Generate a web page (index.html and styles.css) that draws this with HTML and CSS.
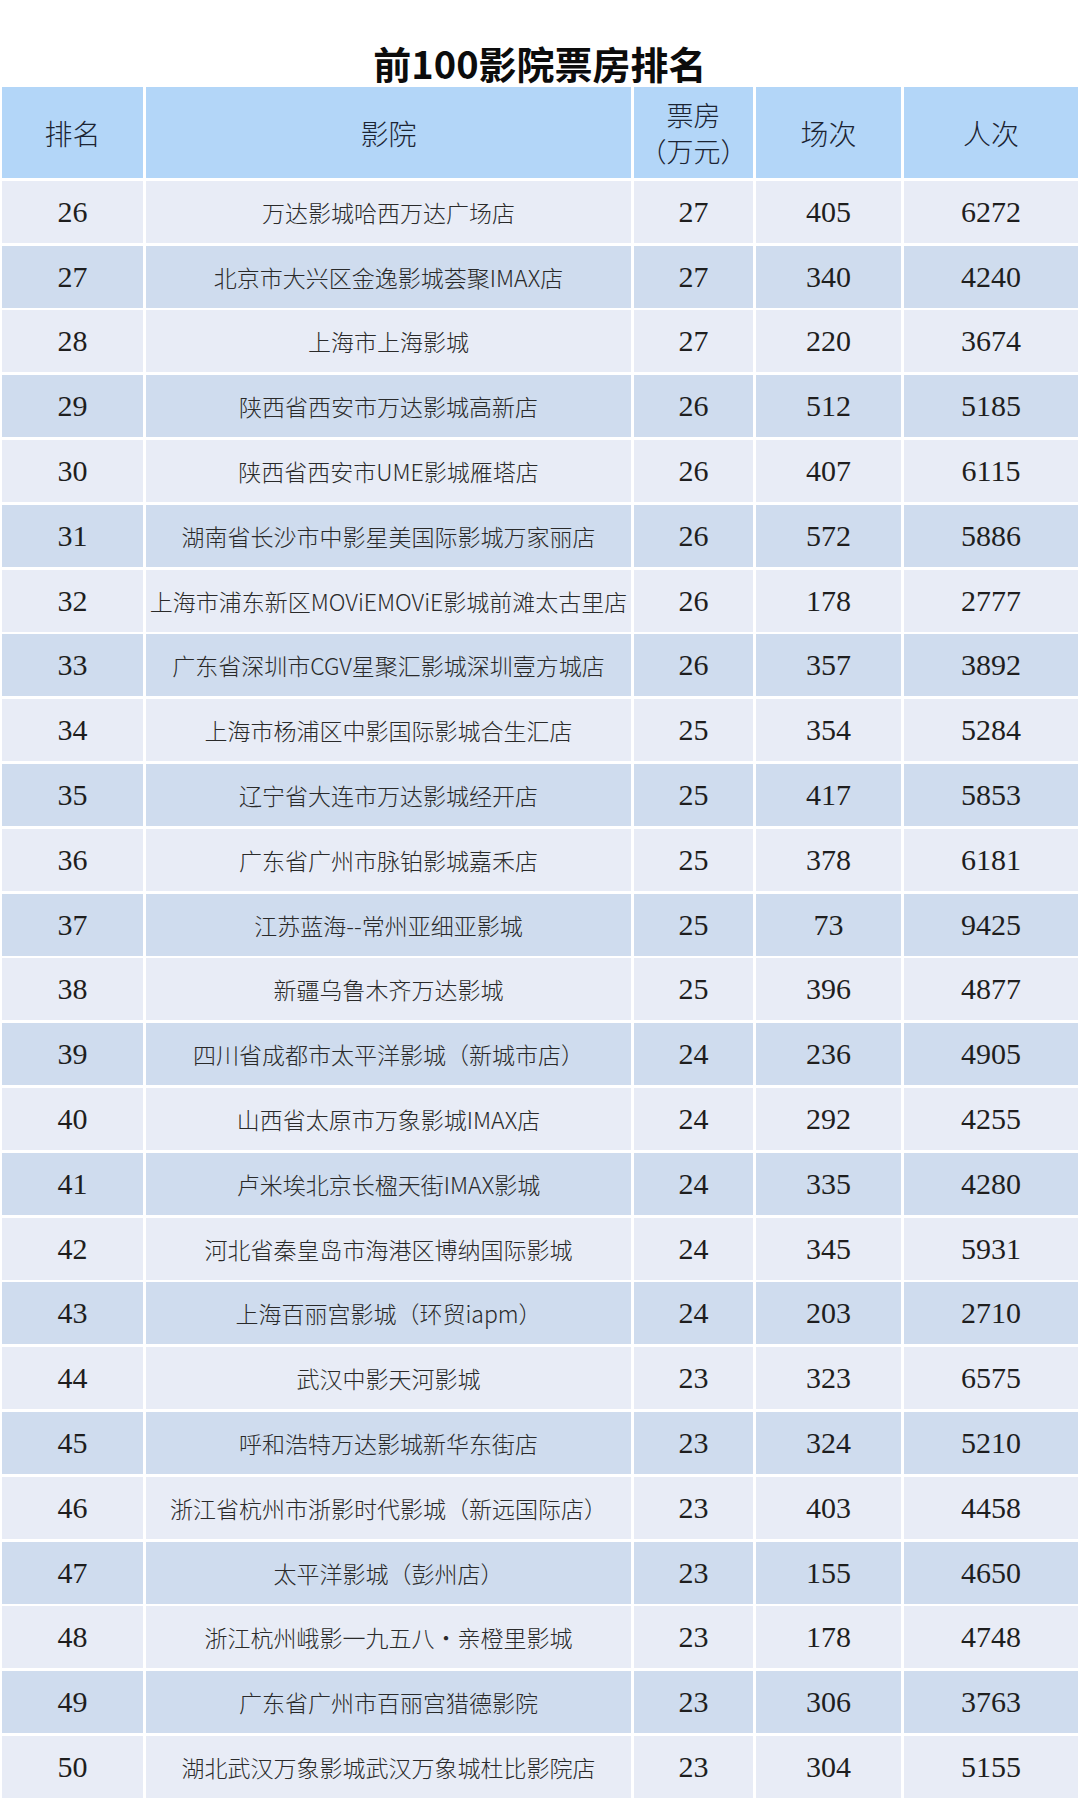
FILE: index.html
```html
<!DOCTYPE html>
<html lang="zh-CN">
<head>
<meta charset="utf-8">
<title>前100影院票房排名</title>
<link rel="stylesheet" href="styles.css">
</head>
<body>
<h1 class="title">前100影院票房排名</h1>
<div class="table">
  <div class="row head">
    <div class="cell">排名</div>
    <div class="cell">影院</div>
    <div class="cell two">票房<br>（万元）</div>
    <div class="cell">场次</div>
    <div class="cell">人次</div>
  </div>
  <div class="row light"><div class="cell num">26</div><div class="cell name">万达影城哈西万达广场店</div><div class="cell num">27</div><div class="cell num">405</div><div class="cell num">6272</div></div>
  <div class="row dark"><div class="cell num">27</div><div class="cell name">北京市大兴区金逸影城荟聚IMAX店</div><div class="cell num">27</div><div class="cell num">340</div><div class="cell num">4240</div></div>
  <div class="row light"><div class="cell num">28</div><div class="cell name">上海市上海影城</div><div class="cell num">27</div><div class="cell num">220</div><div class="cell num">3674</div></div>
  <div class="row dark"><div class="cell num">29</div><div class="cell name">陕西省西安市万达影城高新店</div><div class="cell num">26</div><div class="cell num">512</div><div class="cell num">5185</div></div>
  <div class="row light"><div class="cell num">30</div><div class="cell name">陕西省西安市UME影城雁塔店</div><div class="cell num">26</div><div class="cell num">407</div><div class="cell num">6115</div></div>
  <div class="row dark"><div class="cell num">31</div><div class="cell name">湖南省长沙市中影星美国际影城万家丽店</div><div class="cell num">26</div><div class="cell num">572</div><div class="cell num">5886</div></div>
  <div class="row light"><div class="cell num">32</div><div class="cell name">上海市浦东新区MOViEMOViE影城前滩太古里店</div><div class="cell num">26</div><div class="cell num">178</div><div class="cell num">2777</div></div>
  <div class="row dark"><div class="cell num">33</div><div class="cell name">广东省深圳市CGV星聚汇影城深圳壹方城店</div><div class="cell num">26</div><div class="cell num">357</div><div class="cell num">3892</div></div>
  <div class="row light"><div class="cell num">34</div><div class="cell name">上海市杨浦区中影国际影城合生汇店</div><div class="cell num">25</div><div class="cell num">354</div><div class="cell num">5284</div></div>
  <div class="row dark"><div class="cell num">35</div><div class="cell name">辽宁省大连市万达影城经开店</div><div class="cell num">25</div><div class="cell num">417</div><div class="cell num">5853</div></div>
  <div class="row light"><div class="cell num">36</div><div class="cell name">广东省广州市脉铂影城嘉禾店</div><div class="cell num">25</div><div class="cell num">378</div><div class="cell num">6181</div></div>
  <div class="row dark"><div class="cell num">37</div><div class="cell name">江苏蓝海--常州亚细亚影城</div><div class="cell num">25</div><div class="cell num">73</div><div class="cell num">9425</div></div>
  <div class="row light"><div class="cell num">38</div><div class="cell name">新疆乌鲁木齐万达影城</div><div class="cell num">25</div><div class="cell num">396</div><div class="cell num">4877</div></div>
  <div class="row dark"><div class="cell num">39</div><div class="cell name">四川省成都市太平洋影城（新城市店）</div><div class="cell num">24</div><div class="cell num">236</div><div class="cell num">4905</div></div>
  <div class="row light"><div class="cell num">40</div><div class="cell name">山西省太原市万象影城IMAX店</div><div class="cell num">24</div><div class="cell num">292</div><div class="cell num">4255</div></div>
  <div class="row dark"><div class="cell num">41</div><div class="cell name">卢米埃北京长楹天街IMAX影城</div><div class="cell num">24</div><div class="cell num">335</div><div class="cell num">4280</div></div>
  <div class="row light"><div class="cell num">42</div><div class="cell name">河北省秦皇岛市海港区博纳国际影城</div><div class="cell num">24</div><div class="cell num">345</div><div class="cell num">5931</div></div>
  <div class="row dark"><div class="cell num">43</div><div class="cell name">上海百丽宫影城（环贸iapm）</div><div class="cell num">24</div><div class="cell num">203</div><div class="cell num">2710</div></div>
  <div class="row light"><div class="cell num">44</div><div class="cell name">武汉中影天河影城</div><div class="cell num">23</div><div class="cell num">323</div><div class="cell num">6575</div></div>
  <div class="row dark"><div class="cell num">45</div><div class="cell name">呼和浩特万达影城新华东街店</div><div class="cell num">23</div><div class="cell num">324</div><div class="cell num">5210</div></div>
  <div class="row light"><div class="cell num">46</div><div class="cell name">浙江省杭州市浙影时代影城（新远国际店）</div><div class="cell num">23</div><div class="cell num">403</div><div class="cell num">4458</div></div>
  <div class="row dark"><div class="cell num">47</div><div class="cell name">太平洋影城（彭州店）</div><div class="cell num">23</div><div class="cell num">155</div><div class="cell num">4650</div></div>
  <div class="row light"><div class="cell num">48</div><div class="cell name">浙江杭州峨影一九五八·亲橙里影城</div><div class="cell num">23</div><div class="cell num">178</div><div class="cell num">4748</div></div>
  <div class="row dark"><div class="cell num">49</div><div class="cell name">广东省广州市百丽宫猎德影院</div><div class="cell num">23</div><div class="cell num">306</div><div class="cell num">3763</div></div>
  <div class="row light"><div class="cell num">50</div><div class="cell name">湖北武汉万象影城武汉万象城杜比影院店</div><div class="cell num">23</div><div class="cell num">304</div><div class="cell num">5155</div></div>
</div>
</body>
</html>
```
FILE: styles.css
```css
html, body {
  margin: 0;
  padding: 0;
  background: #ffffff;
}

body {
  width: 1080px;
  height: 1800px;
  overflow: hidden;
}

.title {
  margin: 0;
  padding: 44px 0 5px;
  height: 38px;
  line-height: 38px;
  text-align: center;
  font-family: "Noto Sans CJK SC", sans-serif;
  font-weight: 700;
  font-size: 38px;
  color: #0c0c0c;
}

.table {
  display: flex;
  flex-direction: column;
  gap: 2.8px;
  padding: 0 2px;
}

.row {
  display: grid;
  grid-template-columns: 141px 485px 119px 145px 174px;
  column-gap: 3px;
  height: 62px;
}

.row.head {
  height: 91px;
}

.cell {
  display: flex;
  align-items: center;
  justify-content: center;
  text-align: center;
  white-space: nowrap;
}

.head .cell {
  background: #b3d6f8;
  font-family: "Noto Sans CJK SC", sans-serif;
  font-weight: 300;
  font-size: 28px;
  color: #1b2433;
}

.head .cell.two {
  line-height: 36px;
  font-size: 27px;
}

.light .cell {
  background: #e8ecf6;
}

.dark .cell {
  background: #cfdcee;
}

.num {
  font-family: "Liberation Serif", "Times New Roman", serif;
  font-size: 30px;
  color: #1e1e1e;
}

.name {
  font-family: "Noto Sans CJK SC", sans-serif;
  font-weight: 300;
  font-size: 23px;
  color: #2a2a2a;
}
```
